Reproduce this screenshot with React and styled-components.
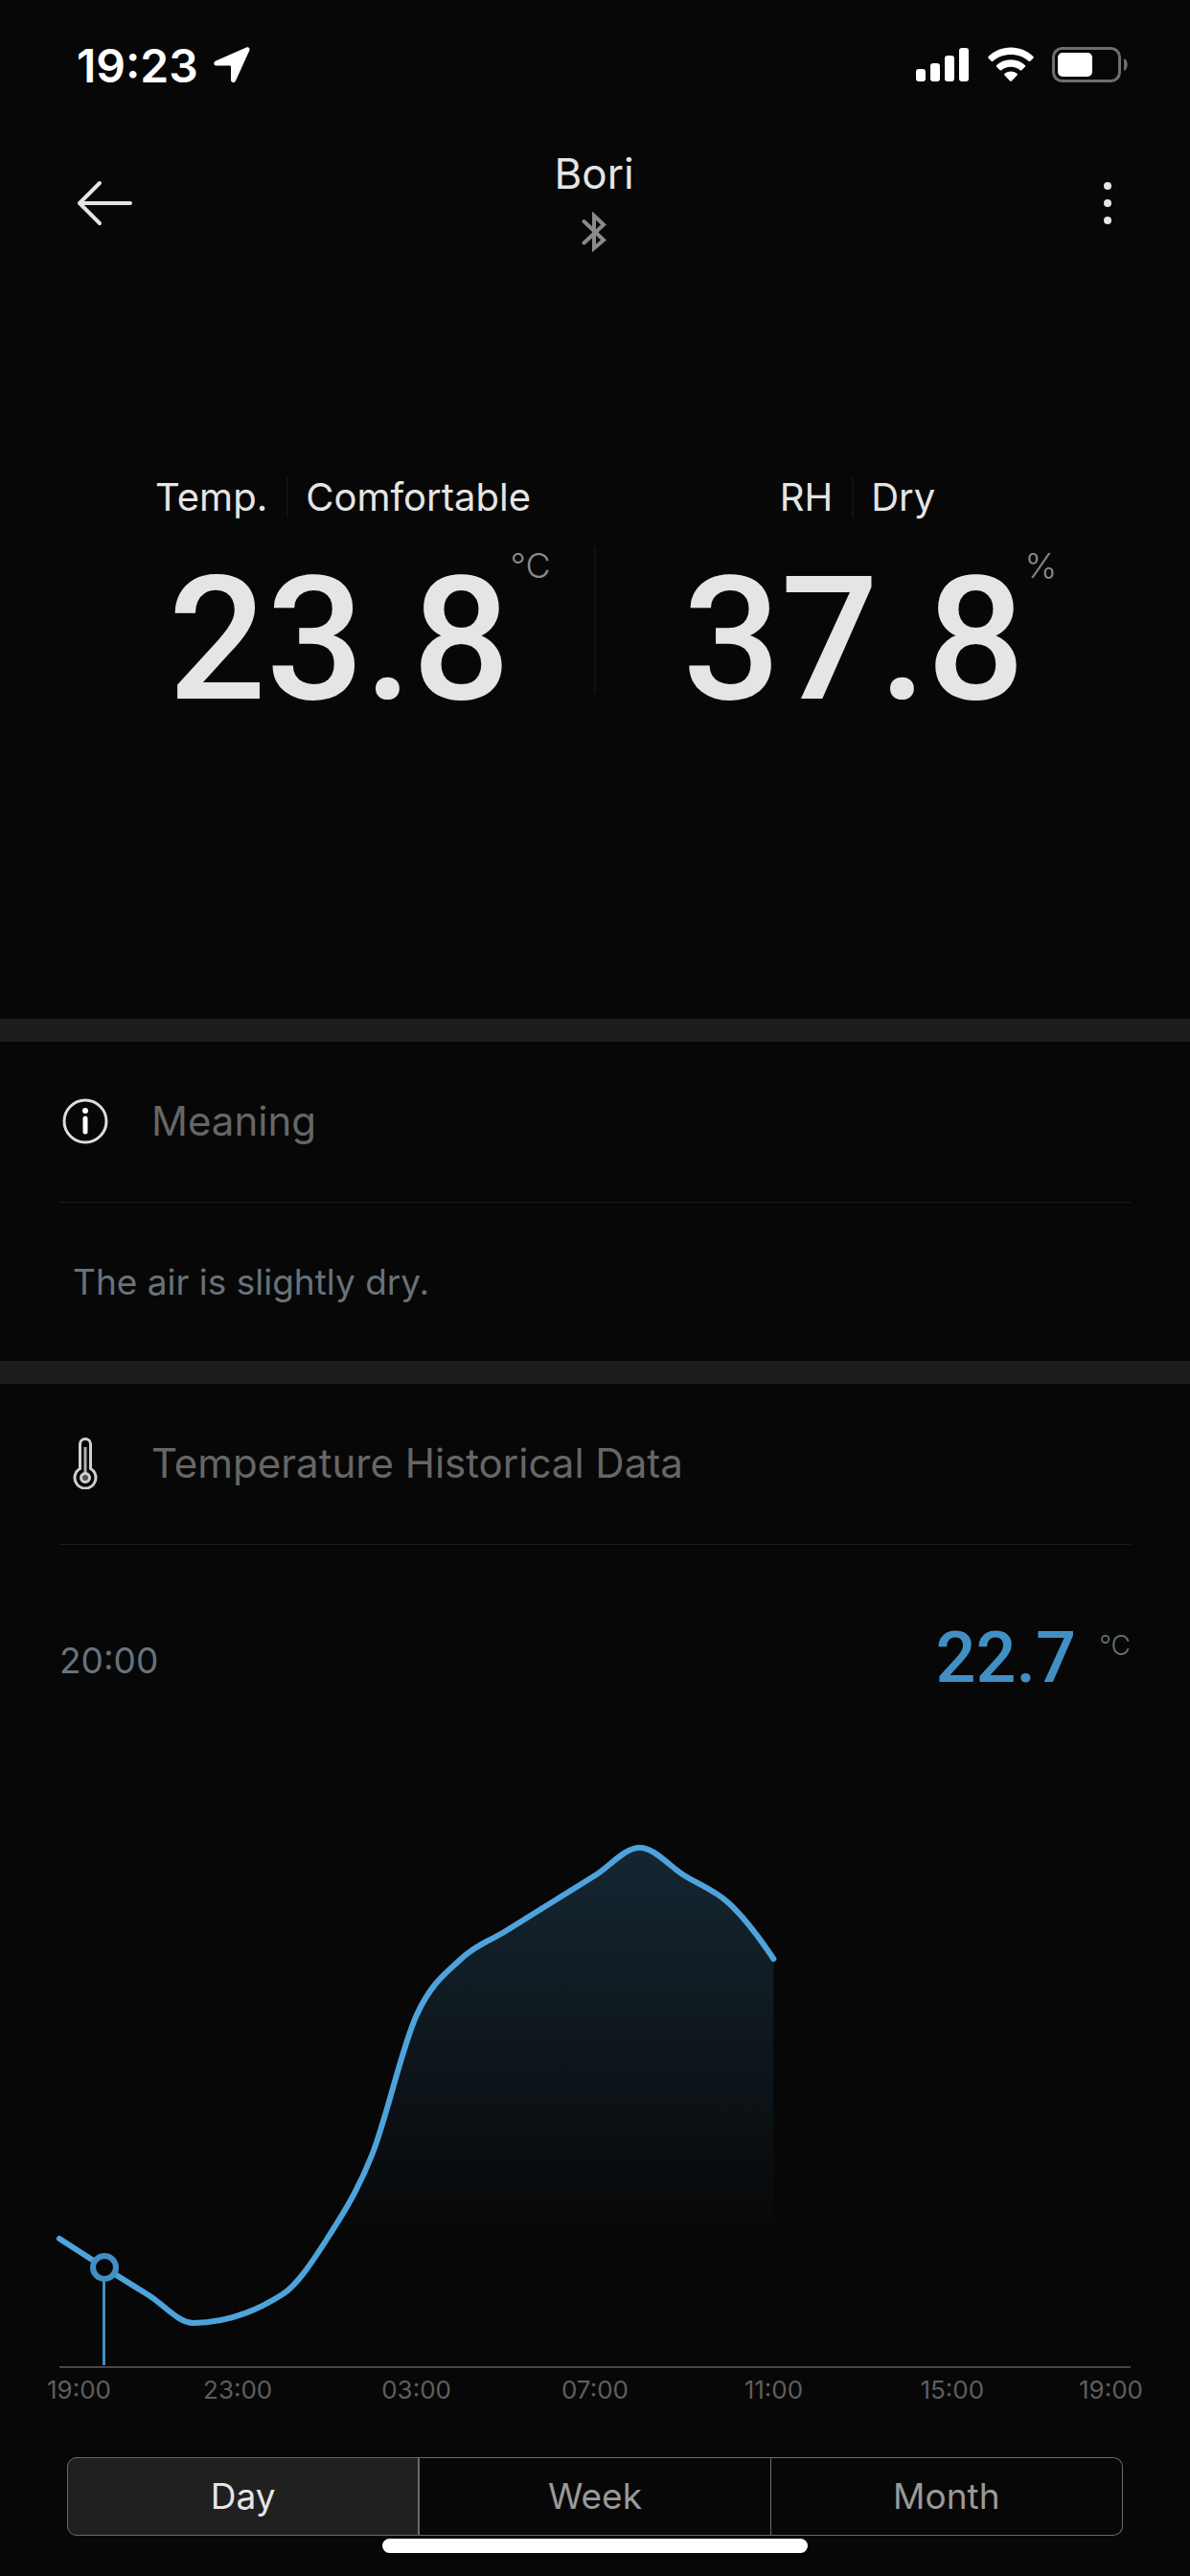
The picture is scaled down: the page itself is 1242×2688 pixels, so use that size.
import { Fragment, useState } from "react"
import styled, { createGlobalStyle } from "styled-components"

const readings = [
  { name: "Temp.", state: "Comfortable", value: "23.8", unit: "°C" },
  { name: "RH", state: "Dry", value: "37.8", unit: "%" },
]

const hours = ["19:00", "23:00", "03:00", "07:00", "11:00", "15:00", "19:00"]
const ranges = ["Day", "Week", "Month"]

// [hours since 19:00, y from the top of the chart], the sensor skipped 23:00
const points = [
  [0, 446], [1, 476], [2, 505], [3, 534], [5, 504], [6, 446], [7, 359], [8, 213],
  [9, 154], [10, 125], [11, 96], [12, 67], [13, 38], [14, 67], [15, 96], [16, 154],
]
const hourWidth = 1118 / 24

// monotone curve, so it never swings past a reading
const linePath = () => {
  const steep = (i) => (points[i + 1][1] - points[i][1]) / (points[i + 1][0] - points[i][0])
  const slope = (i) => {
    if (i === 0) return steep(0)
    if (i === points.length - 1) return steep(i - 1) * 1.2
    const s0 = steep(i - 1)
    const s1 = steep(i)
    if (s0 * s1 <= 0) return 0
    const h0 = points[i][0] - points[i - 1][0]
    const h1 = points[i + 1][0] - points[i][0]
    const mean = (s0 * h1 + s1 * h0) / (h0 + h1)
    return Math.sign(s0) * Math.min(Math.abs(s0) * 2, Math.abs(s1) * 2, Math.abs(mean))
  }
  let d = `M0 ${points[0][1]}`
  for (let i = 1; i < points.length; i++) {
    const [x0, y0] = points[i - 1]
    const [x1, y1] = points[i]
    const t = (x1 - x0) / 3
    d += ` C${(x0 + t) * hourWidth} ${y0 + slope(i - 1) * t} ${(x1 - t) * hourWidth} ${y1 - slope(i) * t} ${x1 * hourWidth} ${y1}`
  }
  return d
}

const StatusIcons = () => (
  <svg width="222" height="38" viewBox="0 0 222 38" fill="#fff">
    <rect x="0" y="23" width="10" height="13" rx="3" />
    <rect x="15" y="17" width="10" height="19" rx="3" />
    <rect x="30" y="9" width="10" height="27" rx="3" />
    <rect x="45" y="1" width="10" height="35" rx="3" />
    <path d="M99 0.5c9.200 0 17.600 3.600 23.500 9.500l.3 1.200-3.700 3.900-1.200 0C112.800 10.600 106.200 8 99 8s-13.800 2.600-18.900 7.100l-1.200 0-3.700-3.900.3-1.200C81.400 4.100 89.800.5 99 .5z" />
    <path d="M99 13.200c5.900 0 11.200 2.200 15.100 6l0 1.200-4.100 4-1.100 0c-2.700-2.400-6.100-3.700-9.900-3.700s-7.200 1.300-9.900 3.700l-1.100 0-4.100-4 0-1.200c3.900-3.800 9.200-6 15.100-6z" />
    <path d="M99 25.500c2.700 0 5 .9 6.800 2.500l0 1.200-6.200 6.600-1.200 0-6.200-6.600 0-1.200c1.800-1.600 4.100-2.500 6.800-2.500z" />
    <rect x="143.500" y="1.500" width="69" height="34" rx="9" fill="none" stroke="#6e6e6e" strokeWidth="3" />
    <rect x="148" y="6" width="36" height="25" rx="5" />
    <path d="M217 12c5 2 5 11 0 13z" fill="#6e6e6e" />
  </svg>
)

const LocationIcon = () => (
  <svg width="38" height="38" viewBox="0 0 38 38" fill="#fff">
    <path d="M34 .6c2.400-1 4.200.8 3.200 3.300L23 35.200c-1.300 2.900-5 2.400-5-.9V20.500c0-.6-.3-.9-.9-.9H3.200C0 19.600-.9 16 2.200 14.600z" />
  </svg>
)

const BackIcon = () => (
  <svg width="58" height="48" viewBox="0 0 58 48" fill="none" stroke="#e5e5e5" strokeWidth="4" strokeLinecap="round" strokeLinejoin="round">
    <path d="M24 3L3 24l21 21M3 24h53" />
  </svg>
)

const MoreIcon = () => (
  <svg width="8" height="46" viewBox="0 0 8 46" fill="#e5e5e5">
    <circle cx="4" cy="5" r="4" />
    <circle cx="4" cy="23" r="4" />
    <circle cx="4" cy="41" r="4" />
  </svg>
)

const BluetoothIcon = () => (
  <svg width="26" height="42" viewBox="0 0 26 42" fill="none" stroke="#8a8a8a" strokeWidth="4">
    <path d="M2.500 10L23 29.500 13 38V4l10 9.500L2.500 32.500" strokeLinecap="round" />
  </svg>
)

const InfoIcon = () => (
  <svg width="54" height="54" viewBox="0 0 54 54">
    <circle cx="27" cy="27" r="22" fill="none" stroke="#dcdcdc" strokeWidth="3" />
    <circle cx="27" cy="16" r="3" fill="#fff" />
    <path d="M27 24v14" stroke="#fff" strokeWidth="5" strokeLinecap="round" />
  </svg>
)

const ThermometerIcon = () => (
  <svg width="54" height="54" viewBox="0 0 54 54" fill="none" stroke="#d0d0d0" strokeWidth="3">
    <path d="M21.500 32.500V7a5.500 5.500 0 0 1 11 0v25.500a11 11 0 1 1-11 0z" />
    <path d="M27 10v27" stroke="#b0b0b0" />
    <circle cx="27" cy="42" r="4.500" fill="#555" />
  </svg>
)

const Chart = () => (
  <ChartSvg viewBox="0 0 1118 582" role="img" aria-label="Temperature over the last day">
    <defs>
      <linearGradient id="fade" gradientUnits="userSpaceOnUse" x1="0" y1="38" x2="0" y2="446">
        <stop offset="0" stopColor="#4ea3dc" stopOpacity="0.2" />
        <stop offset="1" stopColor="#4ea3dc" stopOpacity="0" />
      </linearGradient>
    </defs>
    <path d={`${linePath()} V580 H0 Z`} fill="url(#fade)" />
    <path d={linePath()} fill="none" stroke="#4ea3dc" strokeWidth="6" strokeLinecap="round" />
    <path d="M0 580H1118" stroke="#4a4646" strokeWidth="2" />
    <path d="M46.500 476V578" stroke="#428fc4" strokeWidth="3" />
    <circle cx="47" cy="476" r="12" fill="#070707" stroke="#428fc4" strokeWidth="6" />
  </ChartSvg>
)

const App = () => {
  const [range, setRange] = useState("Day")

  return (
    <Page>
      <GlobalStyle />
      <StatusBar>
        <Clock>19:23 <LocationIcon /></Clock>
        <StatusIcons />
      </StatusBar>

      <Header>
        <IconButton aria-label="Back"><BackIcon /></IconButton>
        <Title>
          <h1>Bori</h1>
          <BluetoothIcon />
        </Title>
        <IconButton aria-label="More" $end><MoreIcon /></IconButton>
      </Header>

      <Readings>
        {readings.map((r, i) => (
          <Fragment key={r.name}>
            {i > 0 && <Divider />}
            <Reading>
              <Labels>
                <span>{r.name}</span>
                <span>{r.state}</span>
              </Labels>
              <Value>
                {r.value}
                <Unit>{r.unit}</Unit>
              </Value>
            </Reading>
          </Fragment>
        ))}
      </Readings>

      <Section>
        <SectionTitle><InfoIcon /><h2>Meaning</h2></SectionTitle>
        <Meaning>The air is slightly dry.</Meaning>
      </Section>

      <Section>
        <SectionTitle><ThermometerIcon /><h2>Temperature Historical Data</h2></SectionTitle>
        <Selected>
          <time>20:00</time>
          <strong>22.7</strong>
          <small>°C</small>
        </Selected>
        <Chart />
      </Section>
      <Hours>
        {hours.map((h, i) => <span key={i}>{h}</span>)}
      </Hours>

      <Tabs>
        {ranges.map((r) => (
          <Tab key={r} $active={r === range} aria-pressed={r === range} onClick={() => setRange(r)}>{r}</Tab>
        ))}
      </Tabs>
      <HomeBar />
    </Page>
  )
}

export default App

const GlobalStyle = createGlobalStyle`
*{
    box-sizing: border-box;
}

body{
    margin: 0;
    background-color: #070707;
}

h1, h2, p{
    margin: 0;
    font-weight: 400;
}

svg{
    display: block;
    flex-shrink: 0;
}

button{
    font-family: inherit;
    cursor: pointer;
}
`;

const Page = styled.main`
font-family: Inter, "Liberation Sans", sans-serif;
color: #e5e5e5;
background-color: #070707;
`;

const StatusBar = styled.div`
display: flex;
justify-content: space-between;
align-items: center;
height: 136px;
padding: 0 64px 0 80px;
`;

const Clock = styled.div`
display: flex;
align-items: center;
gap: 16px;
font-size: 48px;
font-weight: 600;
color: #fff;
`;

const Header = styled.header`
display: grid;
grid-template-columns: 1fr auto 1fr;
align-items: center;
height: 152px;
padding: 0 82px 0 80px;
`;

const IconButton = styled.button`
justify-self: ${(props) => (props.$end ? "end" : "start")};
padding: 0;
border: 0;
background: none;
`;

const Title = styled.div`
display: flex;
flex-direction: column;
align-items: center;
gap: 12px;
padding-bottom: 8px;

h1{
    font-size: 44px;
    line-height: 56px;
}
`;

const Readings = styled.section`
display: grid;
grid-template-columns: 24fr 2px 25fr;
height: 775px;
padding: 210px 74px 0 96px;
`;

const Divider = styled.div`
height: 154px;
margin-top: 72px;
background-color: #121212;
`;

const Reading = styled.div`
display: flex;
flex-direction: column;
align-items: center;
`;

const Labels = styled.div`
display: flex;
font-size: 40px;
line-height: 42px;

span + span{
    margin-left: 20px;
    padding-left: 18px;
    border-left: 2px solid #121212;
}
`;

const Value = styled.div`
position: relative;
margin: 28px 8px 0 0;
font-family: Roboto, sans-serif;
font-size: 180px;
font-weight: 500;
line-height: 200px;
`;

const Unit = styled.span`
position: absolute;
left: 100%;
top: -2px;
font-family: Inter, sans-serif;
font-size: 36px;
font-weight: 300;
line-height: 48px;
color: #8a8a8a;
`;

const Section = styled.section`
padding: 0 62px;
border-top: 24px solid #1e1c1d;
`;

const SectionTitle = styled.div`
display: flex;
align-items: center;
gap: 42px;
height: 168px;
padding-bottom: 2px;
border-bottom: 1px solid #1c1c1c;

h2{
    font-size: 42px;
    color: #666;
}
`;

const Meaning = styled.p`
padding: 0 14px;
font-size: 37px;
line-height: 165px;
color: #68727a;
`;

const Selected = styled.div`
display: flex;
align-items: center;
height: 278px;
padding-bottom: 38px;
color: #68727a;

time{
    flex: 1;
    font-size: 37px;
}

strong{
    padding-bottom: 6px;
    font-family: Roboto, sans-serif;
    font-size: 74px;
    font-weight: 500;
    color: #428fc4;
}

small{
    margin-left: 24px;
    padding-bottom: 30px;
    font-size: 28px;
    font-weight: 300;
}
`;

const ChartSvg = styled.svg`
width: 100%;
height: auto;
overflow: visible;
`;

const Hours = styled.div`
display: grid;
grid-template-columns: 7fr repeat(5, 9fr) 7fr;
padding: 0 10px;
font-size: 26px;
line-height: 44px;
text-align: center;
color: #5e5e5e;
`;

const Tabs = styled.div`
display: grid;
grid-template-columns: repeat(3, 1fr);
margin: 48px 70px 0;
`;

const Tab = styled.button`
height: 82px;
padding: 0 0 2px;
border: 1px solid #6a6a6a;
background-color: ${(props) => (props.$active ? "#202020" : "transparent")};
color: ${(props) => (props.$active ? "#e5e5e5" : "#999")};
font-size: 37px;

&:first-child{
    border-radius: 10px 0 0 10px;
}

&:last-child{
    border-left: 0;
    border-radius: 0 10px 10px 0;
}
`;

const HomeBar = styled.div`
width: 444px;
height: 15px;
margin: 3px auto 24px;
border-radius: 8px;
background-color: #fff;
`;
